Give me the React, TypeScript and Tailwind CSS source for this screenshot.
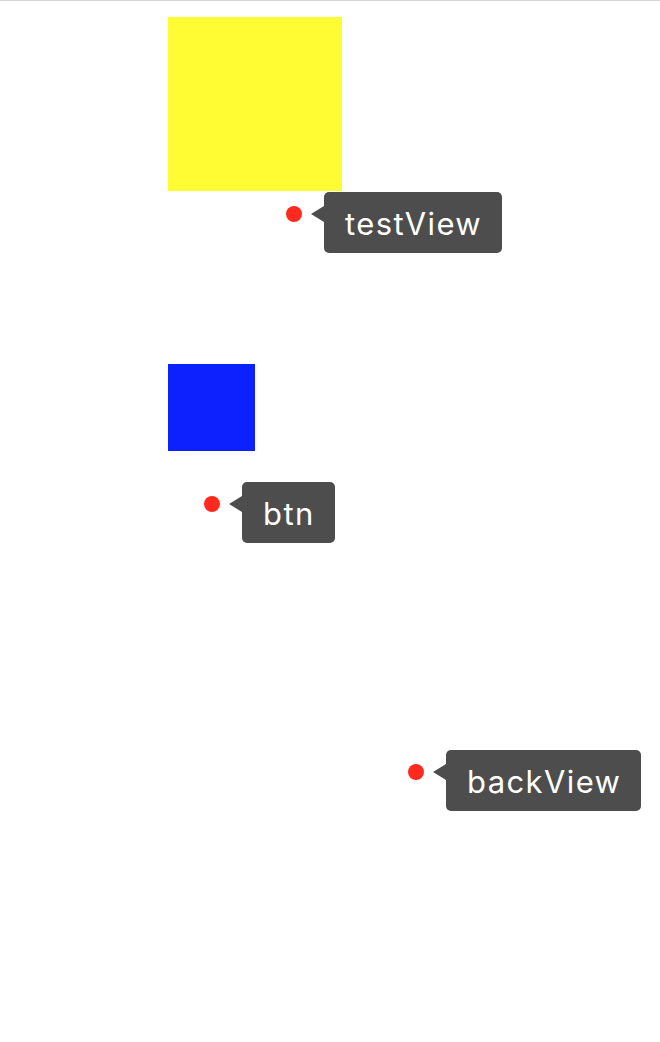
import React from "react";

function Pin({ x, y, label }: { x: number; y: number; label: string }) {
  return (
    <div className="absolute flex items-start" style={{ left: x - 8, top: y - 22 }}>
      <div className="mt-[14px] h-4 w-4 rounded-full bg-[#ff2a1f]" />
      <svg className="ml-[9px] mt-[14px]" width="13" height="16" viewBox="0 0 13 16">
        <polygon points="0,8 13,0 13,16" fill="#4d4d4d" />
      </svg>
      <div className="flex h-[61px] items-center rounded-[5px] bg-[#4d4d4d] pl-[21px] pr-[20px] pt-[4px] text-[31px] tracking-[1.4px] text-white [font-family:Inter,'Noto_Sans',sans-serif]">
        {label}
      </div>
    </div>
  );
}

export default function App() {
  return (
    <div className="relative h-[1042px] w-[660px] overflow-hidden bg-white">
      <div className="h-px w-full bg-[#d6d6d6]" />
      <div className="absolute left-[168px] top-[17px] h-[174px] w-[174px] bg-[#fffc34]" />
      <div className="absolute left-[168px] top-[364px] h-[87px] w-[87px] bg-[#0d21ff]" />
      <Pin x={294} y={214} label="testView" />
      <Pin x={212} y={504} label="btn" />
      <Pin x={416} y={772} label="backView" />
    </div>
  );
}
